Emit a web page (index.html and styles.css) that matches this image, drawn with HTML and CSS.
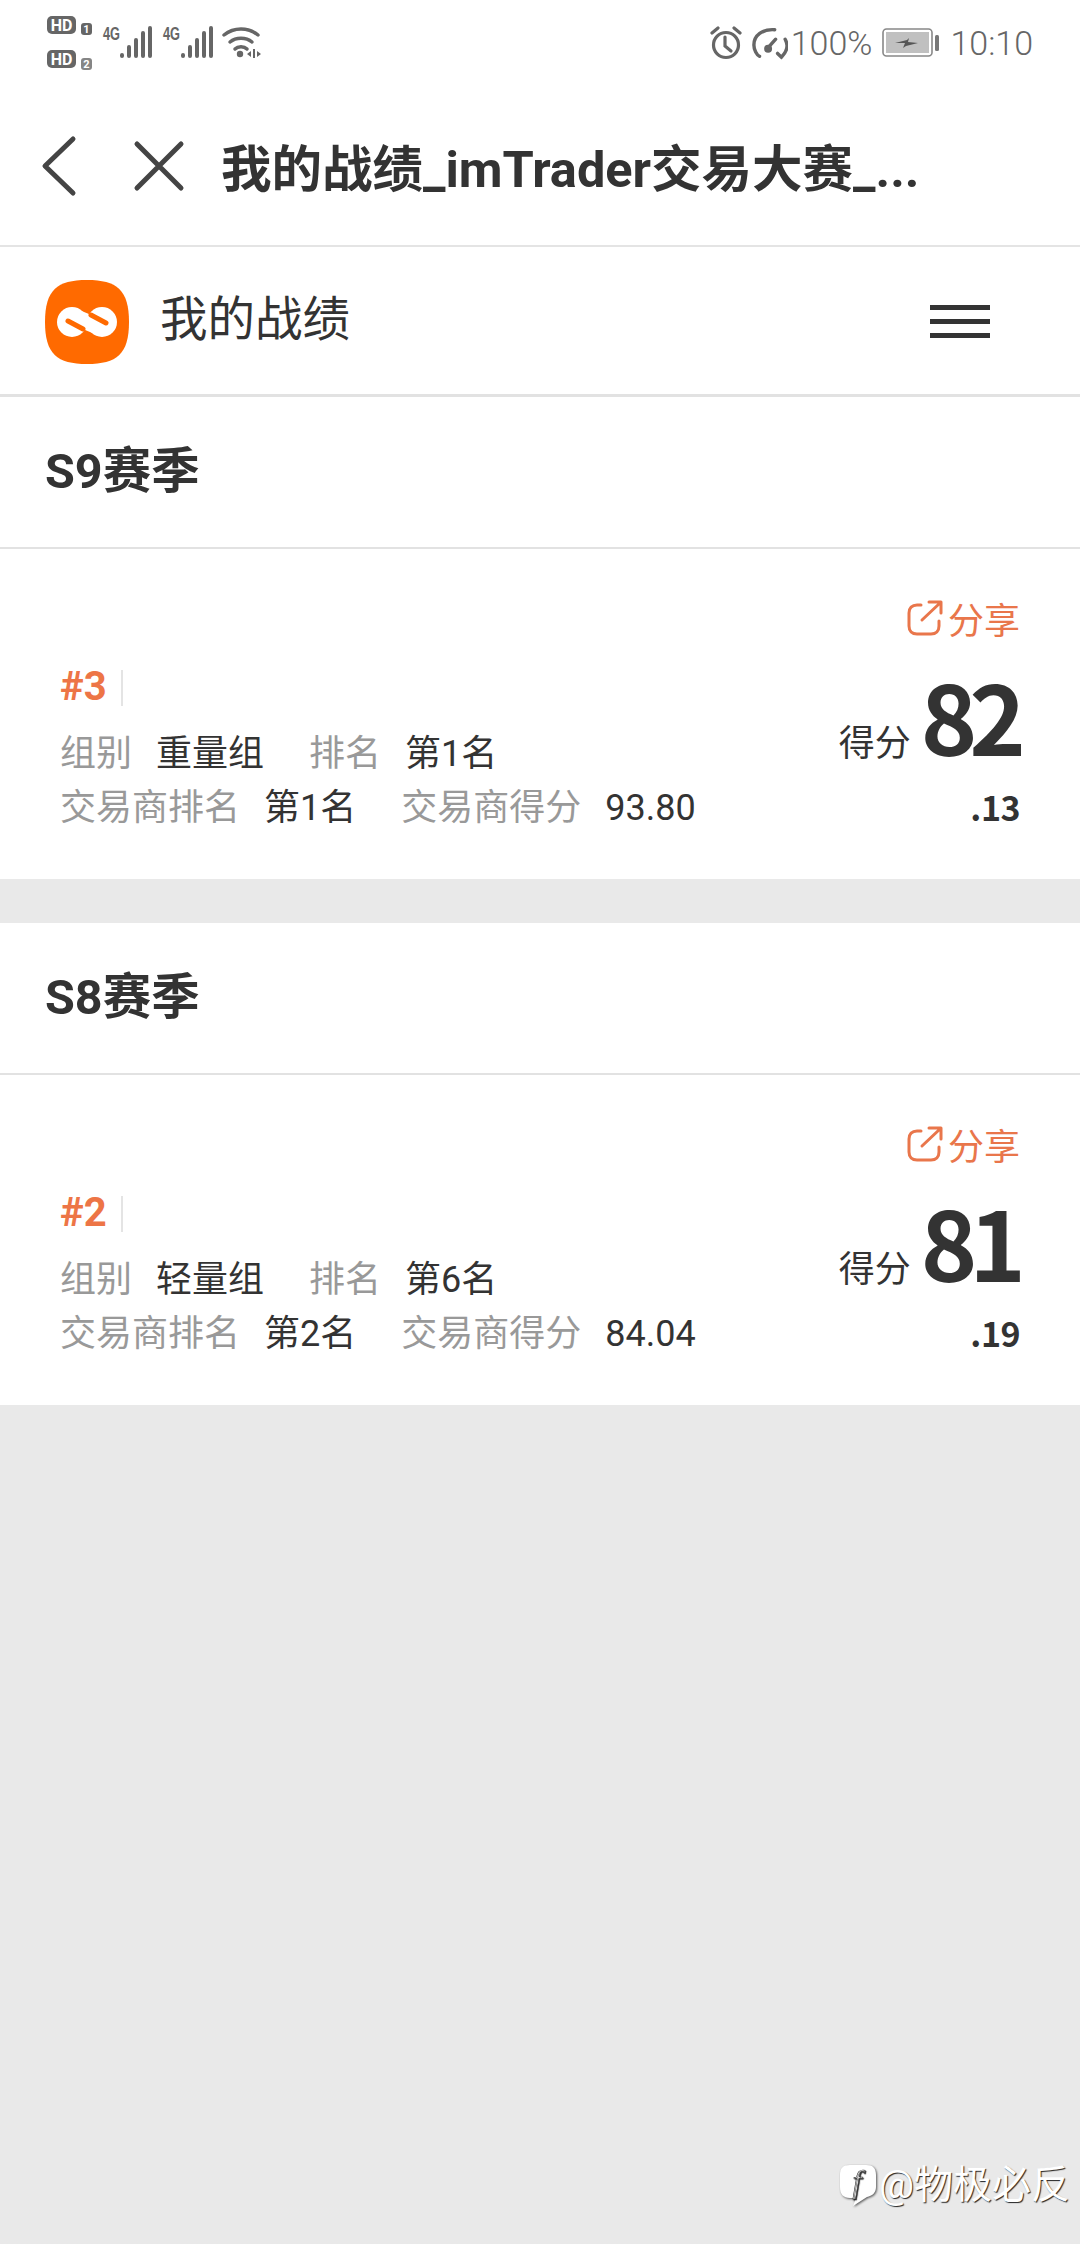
FILE: index.html
```html
<!DOCTYPE html>
<html lang="zh-CN">
    <head>
        <meta charset="UTF-8" />
        <meta name="viewport" content="width=device-width, initial-scale=1.0" />
        <title>我的战绩</title>
        <link rel="stylesheet" href="styles.css">
    </head>
    <body>
        <div class="status-bar">
            <svg class="status-left" width="220" height="60" viewBox="0 0 220 60">
                <g fill="#666">
                    <rect x="0" y="2" width="29" height="18" rx="5" />
                    <rect x="0" y="36" width="29" height="18" rx="5" />
                    <rect x="34" y="9" width="11" height="12" rx="3" />
                    <rect x="34" y="44" width="11" height="12" rx="3" opacity="0.8" />
                    <text x="56" y="26" class="net" textLength="17" lengthAdjust="spacingAndGlyphs">4G</text>
                    <text x="116" y="26" class="net" textLength="17" lengthAdjust="spacingAndGlyphs">4G</text>
                </g>
                <g fill="#fff">
                    <text x="14.5" y="17" class="hd">HD</text>
                    <text x="14.5" y="51" class="hd">HD</text>
                    <text x="39.5" y="19" class="sim">1</text>
                    <text x="39.5" y="54" class="sim">2</text>
                </g>
                <g stroke="#666" stroke-width="4" stroke-linecap="round">
                    <path d="M75 41v1M82 33v9M89 26v16M96 19v23M103 14v28" />
                    <path d="M136 41v1M143 33v9M150 26v16M157 19v23M164 14v28" />
                </g>
                <g fill="none" stroke="#666" stroke-width="3.5" stroke-linecap="round">
                    <path d="M177 21c10-8 24-8 34 0" />
                    <path d="M183 28c6-5 16-5 22 0" />
                    <path d="M188 35c3-3 9-3 12 0" />
                </g>
                <circle cx="193" cy="40" r="3.2" fill="#666" />
                <path d="M204 37v6l-4-3zM206 35h2v9h-2zM210 37l4 3-4 3z" fill="#666" />
            </svg>
            <div class="status-right">
                <svg width="32" height="34" viewBox="0 0 32 34" fill="none" stroke="#666" stroke-width="3.2">
                    <circle cx="16" cy="19" r="12.5" />
                    <path d="M15 11v9l6 5" stroke-linecap="round" />
                    <path d="M2 7l6-5M30 7l-6-5" stroke-linecap="round" />
                </svg>
                <svg class="gauge" width="36" height="34" viewBox="0 0 38 34" fill="none" stroke="#666" stroke-width="3.6" stroke-linecap="round">
                    <path d="M8 31c-3-1-6-7-6-12C2 9 11 2 24 3" />
                    <path d="M35 13c1 2 2 4 2 7 0 5-3 9-6 12l-4-4" />
                    <path d="M17 22l8-9" />
                    <circle cx="17" cy="23" r="2.4" fill="#666" />
                </svg>
                <span class="percent">100%</span>
                <svg class="battery" width="58" height="30" viewBox="0 0 58 30">
                    <rect x="1" y="1" width="49" height="27" rx="3.5" fill="#fff" stroke="#888" stroke-width="1.6" />
                    <rect x="4" y="4" width="43" height="21" fill="#c0c0c0" />
                    <path d="M13 15l12-3 2-2-1 4 10 1-12 3-3 2 2-5z" fill="#555" />
                    <rect x="53" y="7" width="4" height="16" rx="1.5" fill="#777" />
                </svg>
                <span class="clock">10:10</span>
            </div>
        </div>

        <div class="nav-bar">
            <svg class="nav-back" width="36" height="62" viewBox="0 0 36 62" fill="none" stroke="#444" stroke-width="5" stroke-linecap="round" stroke-linejoin="round">
                <path d="M32 4L4 31l28 27" />
            </svg>
            <svg class="nav-close" width="52" height="52" viewBox="0 0 52 52" fill="none" stroke="#444" stroke-width="5" stroke-linecap="round">
                <path d="M4 4l44 44M48 4L4 48" />
            </svg>
            <div class="nav-title">我的战绩_imTrader交易大赛_...</div>
        </div>

        <div class="page-header">
            <svg class="logo" width="84" height="84" viewBox="0 0 84 84">
                <path d="M42 0c30 0 42 10 42 42s-12 42-42 42S0 74 0 42 12 0 42 0z" fill="#ff6a00" />
                <g fill="#fff">
                    <circle cx="27" cy="42" r="15" />
                    <circle cx="57" cy="42" r="15" />
                </g>
                <path d="M30 37L54 47" stroke="#fff" stroke-width="16" />
                <path d="M23 41L38 49M46 35L61 43" stroke="#ff6a00" stroke-width="5" stroke-linecap="round" />
            </svg>
            <div class="page-name">我的战绩</div>
            <div class="menu-btn"><i></i><i></i><i></i></div>
        </div>

        <section class="season">
            <h2 class="season-title">S9赛季</h2>
            <div class="card">
                <div class="card-info">
                    <div class="rank"><span>#3</span></div>
                    <div class="info-row">
                        <span class="label">组别</span><span class="value gap-big">重量组</span>
                        <span class="label">排名</span><span class="value">第1名</span>
                    </div>
                    <div class="info-row">
                        <span class="label">交易商排名</span><span class="value gap-big">第1名</span>
                        <span class="label">交易商得分</span><span class="value">93.80</span>
                    </div>
                </div>
                <div class="card-score">
                    <div class="share">
                        <svg width="36" height="36" viewBox="0 0 36 36" fill="none" stroke="#e9764b" stroke-width="3" stroke-linecap="round" stroke-linejoin="round">
                            <path d="M14 5H10C5 5 2 8 2 13v13c0 5 3 8 8 8h14c5 0 8-3 8-8v-5" />
                            <path d="M15 20L33 3M22 2h12v11" />
                        </svg>
                        <span>分享</span>
                    </div>
                    <div class="score"><span class="score-label">得分</span><span class="score-int">82</span></div>
                    <div class="score-dec">.13</div>
                </div>
            </div>
        </section>

        <section class="season">
            <h2 class="season-title">S8赛季</h2>
            <div class="card">
                <div class="card-info">
                    <div class="rank"><span>#2</span></div>
                    <div class="info-row">
                        <span class="label">组别</span><span class="value gap-big">轻量组</span>
                        <span class="label">排名</span><span class="value">第6名</span>
                    </div>
                    <div class="info-row">
                        <span class="label">交易商排名</span><span class="value gap-big">第2名</span>
                        <span class="label">交易商得分</span><span class="value">84.04</span>
                    </div>
                </div>
                <div class="card-score">
                    <div class="share">
                        <svg width="36" height="36" viewBox="0 0 36 36" fill="none" stroke="#e9764b" stroke-width="3" stroke-linecap="round" stroke-linejoin="round">
                            <path d="M14 5H10C5 5 2 8 2 13v13c0 5 3 8 8 8h14c5 0 8-3 8-8v-5" />
                            <path d="M15 20L33 3M22 2h12v11" />
                        </svg>
                        <span>分享</span>
                    </div>
                    <div class="score"><span class="score-label">得分</span><span class="score-int">81</span></div>
                    <div class="score-dec">.19</div>
                </div>
            </div>
        </section>

        <div class="watermark">
            <svg width="38" height="43" viewBox="0 0 38 43">
                <path d="M11 1h16c7 0 10 3 10 10v12c0 6-4 9-9 10L14 42l3-8h-6C4 34 1 30 1 23V11C1 4 4 1 11 1z" fill="#fff" />
                <text x="18" y="28" class="watermark-f">f</text>
            </svg>
            <span>@物极必反</span>
        </div>
    </body>
</html>
```

FILE: styles.css
```css
html,
body {
    margin: 0;
    padding: 0;
}

body {
    position: relative;
    width: 1080px;
    height: 2244px;
    overflow: hidden;
    background-color: #e9e9e9;
    color: #333;
    font-family: Roboto, "Noto Sans CJK SC", sans-serif;
}

.status-bar {
    display: flex;
    justify-content: space-between;
    align-items: flex-start;
    height: 80px;
    padding: 14px 47px 0 47px;
    box-sizing: border-box;
    background-color: #fff;
}

.status-left .hd {
    font: 700 16px Roboto, sans-serif;
    text-anchor: middle;
}

.status-left .sim {
    font: 700 11px Roboto, sans-serif;
    text-anchor: middle;
}

.status-left .net {
    font: 700 18px "Liberation Sans", sans-serif;
}

.status-right {
    display: flex;
    align-items: center;
    height: 58px;
    color: #666;
    font-size: 34px;
    font-weight: 300;
}

.gauge {
    margin-left: 10px;
}

.percent {
    margin-left: 3px;
}

.battery {
    margin-left: 10px;
}

.clock {
    margin-left: 10px;
}

.nav-bar {
    display: flex;
    align-items: center;
    height: 167px;
    padding: 6px 0 0 41px;
    box-sizing: border-box;
    background-color: #fff;
    border-bottom: 2px solid #e4e4e4;
}

.nav-close {
    margin-left: 56px;
}

.nav-title {
    margin: 0 0 2px 36px;
    font-size: 50.5px;
    font-weight: 700;
    white-space: nowrap;
}

.page-header {
    display: flex;
    align-items: center;
    height: 150px;
    padding: 0 90px 0 45px;
    box-sizing: border-box;
    background-color: #fff;
    border-bottom: 3px solid #e2e2e2;
}

.logo {
    margin-top: 2px;
}

.page-name {
    margin: 0 0 10px 31px;
    font-size: 47.5px;
}

.menu-btn {
    display: flex;
    flex-direction: column;
    gap: 9px;
    margin: 1px 0 0 auto;
}

.menu-btn i {
    display: block;
    width: 60px;
    height: 5px;
    background-color: #333;
}

.season {
    margin-bottom: 44px;
    background-color: #fff;
}

.season-title {
    height: 152px;
    margin: 0;
    padding-left: 45px;
    box-sizing: border-box;
    border-bottom: 2px solid #e2e2e2;
    font-size: 48.5px;
    font-weight: 700;
    line-height: 150px;
}

.card {
    display: flex;
    justify-content: space-between;
    height: 330px;
    padding: 0 60px 0 60px;
    box-sizing: border-box;
}

.card-info {
    padding-top: 121px;
}

.rank {
    height: 36px;
    margin-bottom: 26px;
    color: #ed7546;
    font-size: 40px;
    font-weight: 700;
    line-height: 34px;
}

.rank span {
    display: inline-block;
    height: 36px;
    padding-right: 14px;
    border-right: 2px solid #e4e4e4;
}

.info-row {
    height: 44px;
    margin-bottom: 10px;
    font-size: 36px;
    line-height: 44px;
    white-space: nowrap;
}

.label {
    margin-right: 24px;
    color: #999;
}

.value {
    color: #333;
}

/* the line break between spans adds about 9px of its own */
.gap-big {
    margin-right: 36px;
}

.card-score {
    display: flex;
    flex-direction: column;
    align-items: flex-end;
    padding-top: 49px;
}

.share {
    display: flex;
    align-items: center;
    gap: 5px;
    height: 40px;
    color: #e9764b;
    font-size: 36px;
}

.score {
    display: flex;
    align-items: baseline;
    gap: 10px;
    height: 100px;
    margin-top: 27px;
    line-height: 100px;
}

.score-label {
    font-size: 36px;
}

.score-int {
    margin-right: 2px;
    font-family: "Noto Sans CJK SC", sans-serif;
    font-size: 96px;
    font-weight: 700;
    letter-spacing: -8px;
}

.score-dec {
    margin-top: 20px;
    font-family: "Noto Sans CJK SC", sans-serif;
    font-size: 34px;
    font-weight: 700;
    letter-spacing: -0.5px;
    line-height: 44px;
}

.watermark {
    position: absolute;
    right: 10px;
    top: 2153px;
    display: flex;
    align-items: center;
    gap: 2px;
    color: #fff;
    font-size: 39px;
    text-shadow: 1px 1px 1px #222;
}

.watermark svg {
    margin-top: 8px;
    overflow: visible;
    filter: drop-shadow(1px 1px 1px #555);
}

.watermark-f {
    font: italic 400 32px "Liberation Serif", serif;
    fill: #fff;
    stroke: #333;
    stroke-width: 0.6;
    text-anchor: middle;
}
```
